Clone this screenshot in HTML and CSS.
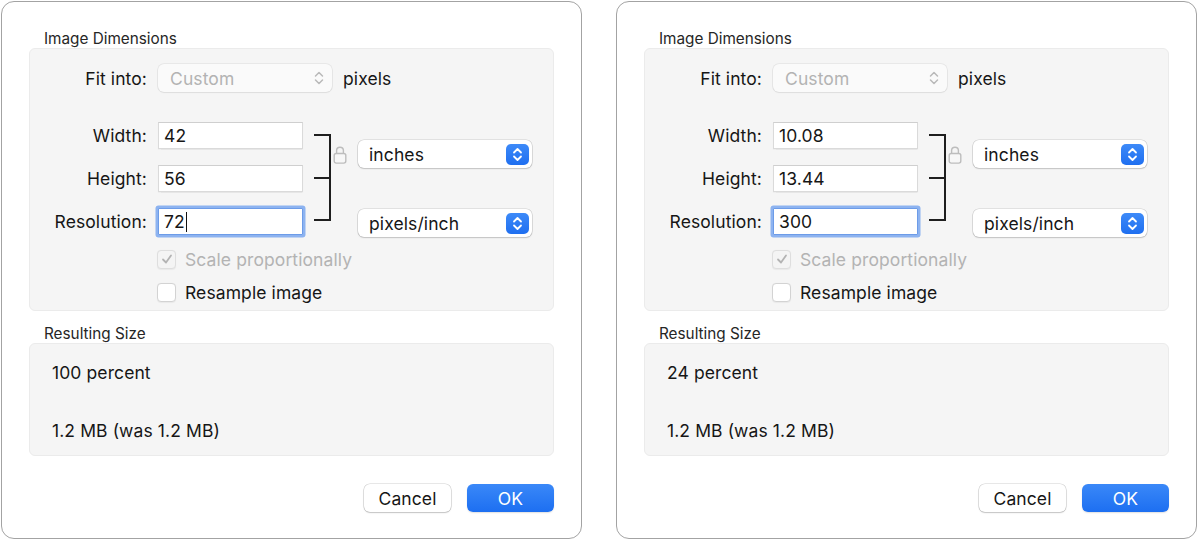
FILE: index.html
```html
<!DOCTYPE html>
<html>
<head>
<meta charset="utf-8">
<link rel="stylesheet" href="styles.css">
</head>
<body>
<div class="page">
  <div class="dialog">
    <div class="section-title">Image Dimensions</div>
    <div class="group dims">
      <div class="fit-row">
        <span class="label">Fit into:</span>
        <div class="popup disabled">
          <span>Custom</span>
          <svg class="gray-chev" width="10" height="16" viewBox="0 0 10 16"><path d="M1.5 6 L5 2.5 L8.5 6 M1.5 10 L5 13.5 L8.5 10" fill="none" stroke="#b9b9b9" stroke-width="1.5" stroke-linecap="round" stroke-linejoin="round"/></svg>
        </div>
        <span class="unit">pixels</span>
      </div>
      <div class="size-block">
        <div class="fields">
          <div class="frow"><span class="label">Width:</span><div class="field">42</div></div>
          <div class="frow"><span class="label">Height:</span><div class="field">56</div></div>
          <div class="frow"><span class="label">Resolution:</span><div class="field focus">72<span class="caret"></span></div></div>
        </div>
        <svg class="bracket" width="30" height="100" viewBox="0 0 30 100"><path d="M11 13 H27 V98 H11 M11 56 H27" fill="none" stroke="#1e1e1e" stroke-width="2"/></svg>
        <svg class="lock" width="14" height="19" viewBox="0 0 14 19"><path d="M3.6 8.5 V5.6 a3.4 3.4 0 0 1 6.8 0 V8.5" fill="none" stroke="#bdbdbd" stroke-width="1.4"/><rect x="1.2" y="8.5" width="11.6" height="9.6" rx="2" fill="#f7f7f7" stroke="#bdbdbd" stroke-width="1.4"/></svg>
        <div class="units">
          <div class="popup">
            <span>inches</span>
            <span class="blue-chev"><svg width="23" height="21" viewBox="0 0 23 21"><path d="M8 8.5 L11.5 5 L15 8.5 M8 12.5 L11.5 16 L15 12.5" fill="none" stroke="#fff" stroke-width="1.8" stroke-linecap="round" stroke-linejoin="round"/></svg></span>
          </div>
          <div class="popup">
            <span>pixels/inch</span>
            <span class="blue-chev"><svg width="23" height="21" viewBox="0 0 23 21"><path d="M8 8.5 L11.5 5 L15 8.5 M8 12.5 L11.5 16 L15 12.5" fill="none" stroke="#fff" stroke-width="1.8" stroke-linecap="round" stroke-linejoin="round"/></svg></span>
          </div>
        </div>
      </div>
      <div class="check-row disabled first">
        <span class="box checked"><svg width="14" height="14" viewBox="0 0 14 14"><path d="M3 7.5 L6 10.5 L11 3.5" fill="none" stroke="#b3b3b3" stroke-width="1.8" stroke-linecap="round" stroke-linejoin="round"/></svg></span>
        <span>Scale proportionally</span>
      </div>
      <div class="check-row">
        <span class="box"></span>
        <span>Resample image</span>
      </div>
    </div>
    <div class="section-title second">Resulting Size</div>
    <div class="group result">
      <div class="rline">100 percent</div>
      <div class="rline">1.2 MB (was 1.2 MB)</div>
    </div>
    <div class="buttons">
      <button class="btn">Cancel</button>
      <button class="btn ok">OK</button>
    </div>
  </div>

  <div class="dialog">
    <div class="section-title">Image Dimensions</div>
    <div class="group dims">
      <div class="fit-row">
        <span class="label">Fit into:</span>
        <div class="popup disabled">
          <span>Custom</span>
          <svg class="gray-chev" width="10" height="16" viewBox="0 0 10 16"><path d="M1.5 6 L5 2.5 L8.5 6 M1.5 10 L5 13.5 L8.5 10" fill="none" stroke="#b9b9b9" stroke-width="1.5" stroke-linecap="round" stroke-linejoin="round"/></svg>
        </div>
        <span class="unit">pixels</span>
      </div>
      <div class="size-block">
        <div class="fields">
          <div class="frow"><span class="label">Width:</span><div class="field">10.08</div></div>
          <div class="frow"><span class="label">Height:</span><div class="field">13.44</div></div>
          <div class="frow"><span class="label">Resolution:</span><div class="field focus">300</div></div>
        </div>
        <svg class="bracket" width="30" height="100" viewBox="0 0 30 100"><path d="M11 13 H27 V98 H11 M11 56 H27" fill="none" stroke="#1e1e1e" stroke-width="2"/></svg>
        <svg class="lock" width="14" height="19" viewBox="0 0 14 19"><path d="M3.6 8.5 V5.6 a3.4 3.4 0 0 1 6.8 0 V8.5" fill="none" stroke="#bdbdbd" stroke-width="1.4"/><rect x="1.2" y="8.5" width="11.6" height="9.6" rx="2" fill="#f7f7f7" stroke="#bdbdbd" stroke-width="1.4"/></svg>
        <div class="units">
          <div class="popup">
            <span>inches</span>
            <span class="blue-chev"><svg width="23" height="21" viewBox="0 0 23 21"><path d="M8 8.5 L11.5 5 L15 8.5 M8 12.5 L11.5 16 L15 12.5" fill="none" stroke="#fff" stroke-width="1.8" stroke-linecap="round" stroke-linejoin="round"/></svg></span>
          </div>
          <div class="popup">
            <span>pixels/inch</span>
            <span class="blue-chev"><svg width="23" height="21" viewBox="0 0 23 21"><path d="M8 8.5 L11.5 5 L15 8.5 M8 12.5 L11.5 16 L15 12.5" fill="none" stroke="#fff" stroke-width="1.8" stroke-linecap="round" stroke-linejoin="round"/></svg></span>
          </div>
        </div>
      </div>
      <div class="check-row disabled first">
        <span class="box checked"><svg width="14" height="14" viewBox="0 0 14 14"><path d="M3 7.5 L6 10.5 L11 3.5" fill="none" stroke="#b3b3b3" stroke-width="1.8" stroke-linecap="round" stroke-linejoin="round"/></svg></span>
        <span>Scale proportionally</span>
      </div>
      <div class="check-row">
        <span class="box"></span>
        <span>Resample image</span>
      </div>
    </div>
    <div class="section-title second">Resulting Size</div>
    <div class="group result">
      <div class="rline">24 percent</div>
      <div class="rline">1.2 MB (was 1.2 MB)</div>
    </div>
    <div class="buttons">
      <button class="btn">Cancel</button>
      <button class="btn ok">OK</button>
    </div>
  </div>
</div>
</body>
</html>
```

FILE: styles.css
```css
* { box-sizing: border-box; }
html, body { margin: 0; padding: 0; background: #fff; }
body {
  font-family: Inter, "Open Sans", "Liberation Sans", sans-serif;
  color: #161616;
  font-size: 17.5px;
  letter-spacing: 0.1px;
}
.page {
  display: flex;
  gap: 34px;
  padding: 1px 0 0 1px;
}
.dialog {
  width: 581px;
  height: 538px;
  border: 1px solid #a3a3a3;
  border-radius: 13px;
  background: #fff;
  padding: 28px 27px 0 27px;
  display: flex;
  flex-direction: column;
}
.section-title {
  font-size: 15.3px;
  letter-spacing: 0;
  line-height: 18px;
  height: 18px;
  padding-left: 15px;
  color: #262626;
}
.section-title.second {
  margin-top: 13px;
  height: 19px;
  line-height: 19px;
}
.group {
  background: #f5f5f5;
  border: 1px solid #ebebeb;
  border-radius: 6px;
  width: 525px;
}
.dims {
  height: 263px;
  padding-top: 15px;
}
.label {
  width: 128px;
  padding-right: 11px;
  text-align: right;
  flex: none;
}
.fit-row {
  display: flex;
  align-items: center;
  height: 28px;
}
.popup {
  width: 174px;
  height: 28px;
  border-radius: 6px;
  background: #fff;
  box-shadow: 0 0 0 0.6px rgba(0,0,0,0.16), 0 1px 1.5px rgba(0,0,0,0.14);
  display: flex;
  align-items: center;
  justify-content: space-between;
  padding: 0 3px 0 11px;
  flex: none;
}
.popup.disabled {
  background: #fafafa;
  box-shadow: 0 0 0 0.8px rgba(0,0,0,0.07), 0 1px 1.5px rgba(0,0,0,0.05);
  color: #b3b3b3;
  padding: 0 8px 0 12px;
}
.unit {
  margin-left: 11px;
}
.size-block {
  display: flex;
  margin-top: 30px;
  height: 115px;
}
.fields {
  display: flex;
  flex-direction: column;
  gap: 16px;
}
.frow {
  display: flex;
  align-items: center;
  height: 27px;
}
.field {
  width: 145px;
  height: 27px;
  background: #fff;
  border: 1px solid #dadada;
  border-top-color: #cfcfcf;
  box-shadow: 0 0.5px 1px rgba(0,0,0,0.06);
  padding: 0 5px;
  line-height: 25px;
  display: flex;
  align-items: center;
}
.field.focus {
  border-color: #6d9ce8;
  border-radius: 1px;
  box-shadow: 0 0 0 2.5px #8db3f0;
}
.caret {
  display: inline-block;
  width: 1.5px;
  height: 20px;
  background: #111;
  margin-left: 1px;
}
.bracket { flex: none; display: block; }
.lock {
  flex: none;
  margin-top: 23px;
  margin-right: 11px;
  display: block;
}
.units {
  display: flex;
  flex-direction: column;
  padding-top: 18px;
  gap: 41px;
}
.blue-chev {
  width: 23px;
  height: 21px;
  border-radius: 5px;
  background: linear-gradient(#3d8af8, #1f6ff0);
  display: block;
}
.blue-chev svg { display: block; }
.gray-chev { display: block; }
.check-row {
  display: flex;
  align-items: center;
  height: 20px;
  padding-left: 127px;
  gap: 9px;
  margin-top: 13px;
}
.check-row.first { margin-top: 12px; }
.check-row.disabled { color: #b3b3b3; }
.box {
  width: 19px;
  height: 19px;
  border-radius: 4px;
  background: #fff;
  border: 1px solid #d3d3d3;
  box-shadow: 0 0.5px 1px rgba(0,0,0,0.05);
  display: flex;
  align-items: center;
  justify-content: center;
  flex: none;
}
.box.checked {
  background: #f4f4f4;
  border-color: #dedede;
}
.result {
  height: 113px;
  padding: 19px 0 0 22px;
}
.rline {
  line-height: 20px;
  height: 20px;
}
.rline + .rline { margin-top: 38px; }
.buttons {
  display: flex;
  justify-content: flex-end;
  gap: 16px;
  margin-top: 28px;
  padding-right: 0;
  width: 525px;
}
.btn {
  width: 87px;
  height: 28px;
  border: none;
  border-radius: 6px;
  background: #fff;
  box-shadow: 0 0 0 0.6px rgba(0,0,0,0.18), 0 1px 1.5px rgba(0,0,0,0.16);
  font-family: inherit;
  font-size: 17.5px;
  letter-spacing: 0.1px;
  color: #161616;
  padding: 0;
}
.btn.ok {
  background: linear-gradient(#3a88f8, #1d6ff1);
  color: #fff;
  box-shadow: 0 1px 1.5px rgba(0,0,0,0.12);
}
```
